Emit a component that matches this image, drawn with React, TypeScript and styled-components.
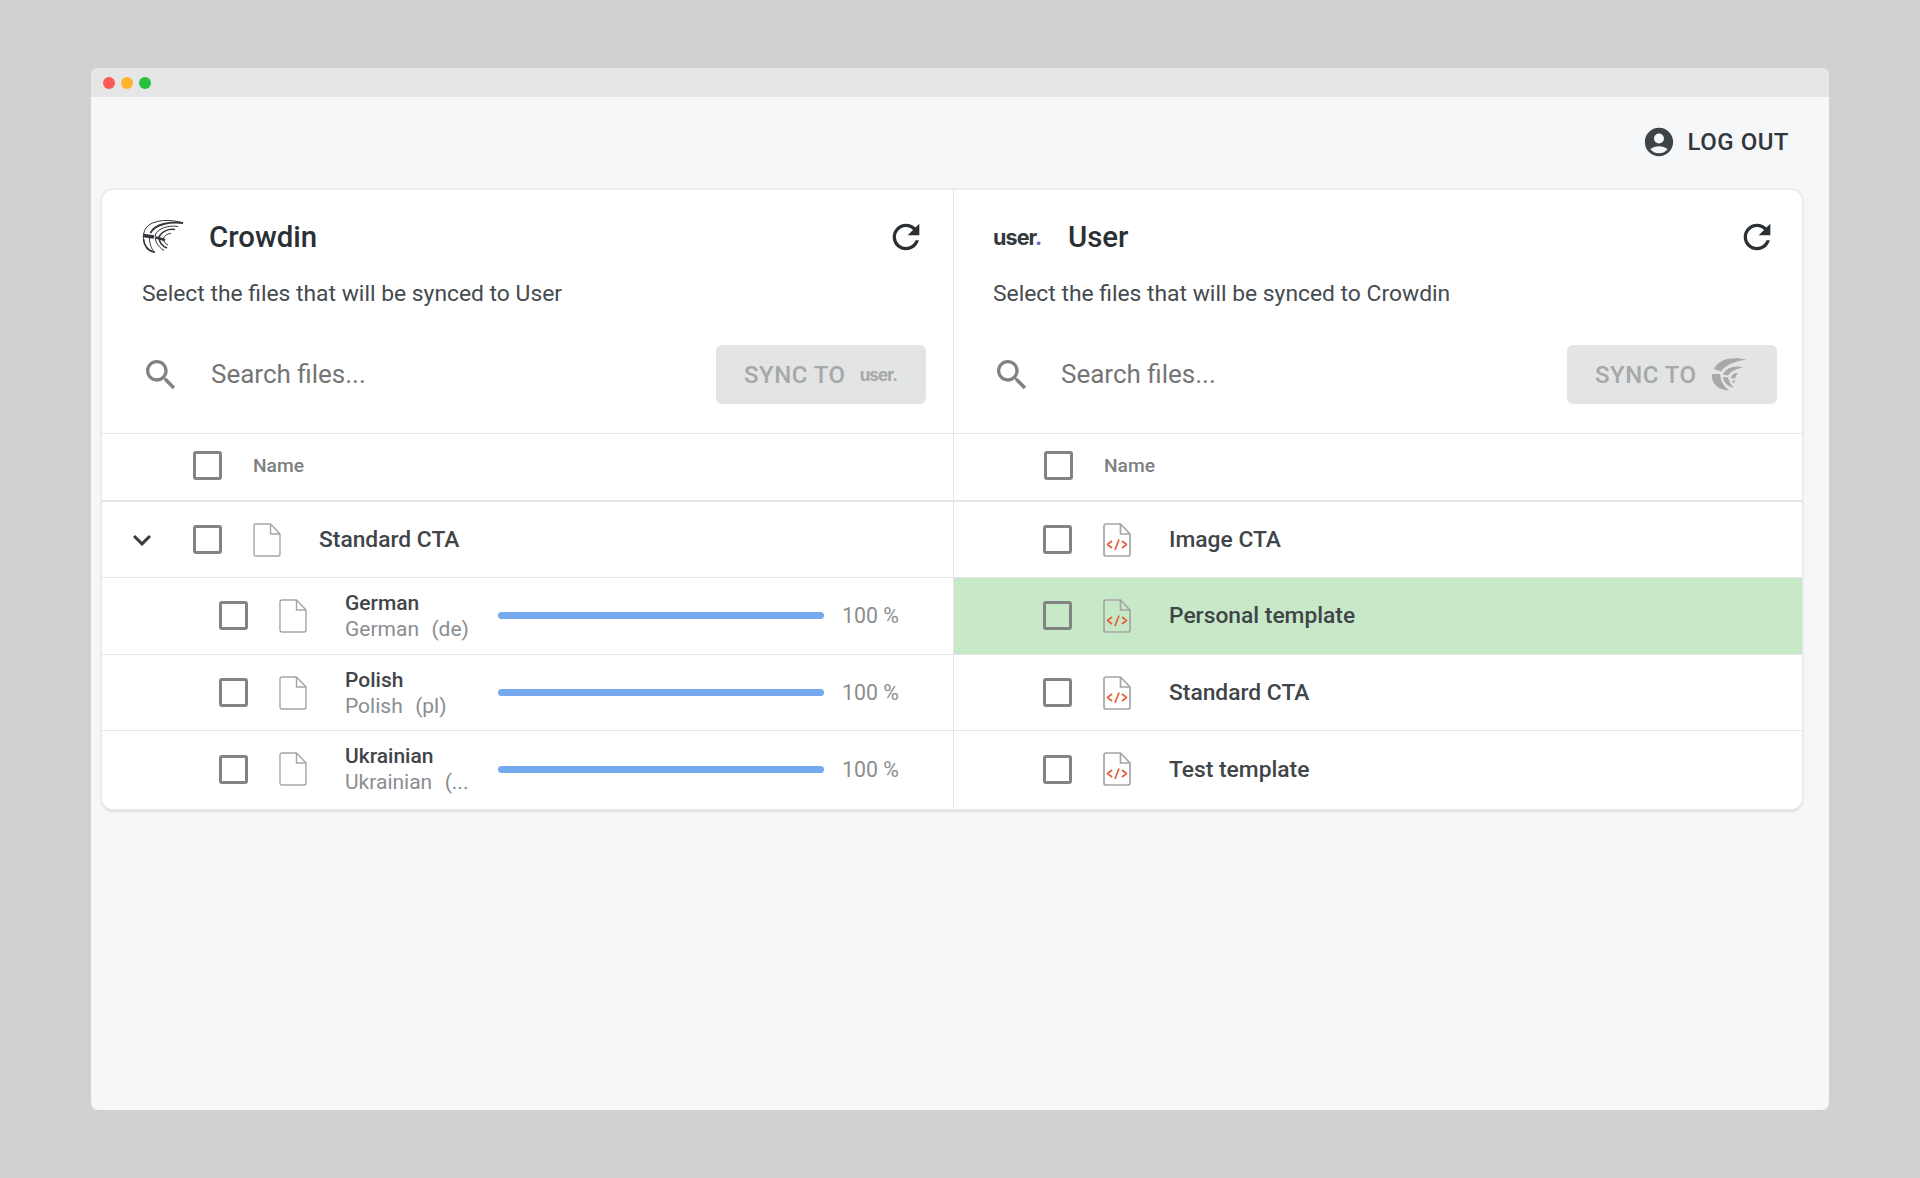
import React from "react";
import styled, { createGlobalStyle } from "styled-components";

const Global = createGlobalStyle`
  html, body { margin: 0; padding: 0; background: #d1d1d1; }
  body { font-family: Roboto, "Liberation Sans", sans-serif; }
`;

const Page = styled.div`
  width: 1920px;
  height: 1178px;
  box-sizing: border-box;
  padding: 68px 91px;
  background: #d1d1d1;
`;
const Window = styled.div`
  height: 1042px;
  border-radius: 7px;
  overflow: hidden;
  background: #f6f7f9;
`;
const TitleBar = styled.div`
  height: 29px;
  box-sizing: border-box;
  padding: 9px 0 0 12px;
  display: flex;
  gap: 6px;
  background: #e6e6e6;
`;
const Light = styled.span<{ $c: string }>`
  width: 12px;
  height: 12px;
  border-radius: 50%;
  background: ${(p) => p.$c};
`;
const TopBar = styled.div`
  height: 93px;
  box-sizing: border-box;
  padding: 0 40px 3px 0;
  display: flex;
  justify-content: flex-end;
  align-items: center;
`;
const LogOut = styled.button`
  display: flex;
  align-items: center;
  gap: 12px;
  border: 0;
  padding: 0;
  background: none;
  color: #30363a;
  font: 500 24px Roboto, sans-serif;
  letter-spacing: 0.5px;
  svg { width: 34px; height: 34px; fill: #3c4448; }
`;
const Card = styled.div`
  margin: 0 27px 0 11px;
  height: 619px;
  display: grid;
  grid-template-columns: 852px 848px;
  background: #fff;
  border-radius: 11px;
  overflow: hidden;
  box-shadow: 0 0 0 1.5px #e8e9eb, 0 2px 3px rgba(0, 0, 0, 0.2);
`;
const Panel = styled.section<{ $right?: boolean }>`
  display: flex;
  flex-direction: column;
  border-right: ${(p) => (p.$right ? "0" : "1px solid #e6e6e6")};
`;
const Head = styled.div`
  height: 244px;
  box-sizing: border-box;
  display: flex;
  flex-direction: column;
  border-bottom: 1px solid #e6e6e6;
`;
const TitleRow = styled.div<{ $right?: boolean }>`
  height: 76px;
  box-sizing: border-box;
  padding: 17px ${(p) => (p.$right ? 25 : 27)}px 0 ${(p) => (p.$right ? 39 : 40)}px;
  display: flex;
  align-items: center;
`;
const LogoSlot = styled.div<{ $w: number }>`
  width: ${(p) => p.$w}px;
  display: flex;
  align-items: center;
`;
const UserMark = styled.span<{ $muted?: boolean; $size: number }>`
  font-family: Inter, Roboto, sans-serif;
  font-weight: 700;
  font-size: ${(p) => p.$size}px;
  letter-spacing: -0.9px;
  color: ${(p) => (p.$muted ? "#a6a8a9" : "#33383b")};
  b { color: ${(p) => (p.$muted ? "#a6a8a9" : "#5c6bc0")}; font-weight: 700; }
`;
const Title = styled.h2`
  flex: 1;
  margin: 0;
  font: 500 29.4px Roboto, sans-serif;
  color: #2a3034;
`;
const Refresh = styled.svg`
  width: 40px;
  height: 40px;
  fill: #2a3034;
`;
const Subtitle = styled.p<{ $right?: boolean }>`
  margin: 0;
  padding: 6px 0 0 ${(p) => (p.$right ? 39 : 40)}px;
  height: 44px;
  line-height: 44px;
  font-size: 22.85px;
  color: #454b4e;
`;
const SearchRow = styled.div<{ $right?: boolean }>`
  height: 59px;
  margin-top: 29px;
  padding: 0 ${(p) => (p.$right ? 25 : 27)}px 0 ${(p) => (p.$right ? 38 : 39)}px;
  display: flex;
  align-items: center;
`;
const SearchGlyph = styled.svg`
  width: 40px;
  height: 40px;
  flex: none;
  fill: #7f8283;
`;
const SearchText = styled.span<{ $right?: boolean }>`
  flex: 1;
  margin-left: ${(p) => (p.$right ? 29 : 30)}px;
  padding-bottom: 2px;
  font-size: 26px;
  color: #757575;
`;
const SyncButton = styled.button`
  width: 210px;
  height: 59px;
  padding: 0 0 0 28px;
  border: 0;
  border-radius: 6px;
  background: #e3e4e4;
  display: flex;
  align-items: center;
  gap: 14px;
  color: #a6a8a9;
  font: 500 24px Roboto, sans-serif;
  letter-spacing: 0.5px;
`;
const NameHead = styled.div<{ $right?: boolean }>`
  height: 68px;
  box-sizing: border-box;
  border-bottom: 2px solid #e4e4e4;
  display: flex;
  align-items: center;
  padding: 0 0 3px ${(p) => (p.$right ? 90 : 91)}px;
`;
const HeadLabel = styled.span`
  margin-left: 31px;
  color: #7d8081;
  font-size: 19.2px;
  font-weight: 500;
`;
const Rows = styled.div`
  flex: 1;
  display: flex;
  flex-direction: column;
`;
const Row = styled.div<{ $hi?: boolean; $indent: number }>`
  height: 76.7px;
  flex: none;
  box-sizing: border-box;
  display: flex;
  align-items: center;
  padding-left: ${(p) => p.$indent}px;
  background: ${(p) => (p.$hi ? "#c8e9c8" : "transparent")};
  &:first-child { height: 75px; }
  & + & { border-top: 1px solid #e6e6e6; }
`;
const Check = styled.span`
  width: 29px;
  height: 29px;
  flex: none;
  box-sizing: border-box;
  border: 3.5px solid #828383;
  border-radius: 3px;
`;
const Chevron = styled.svg`
  width: 36px;
  height: 36px;
  flex: none;
  margin: 0 33px 0 -69px;
  fill: #363c40;
`;
const FileGlyph = styled.svg`
  width: 28px;
  height: 34px;
  flex: none;
  margin-left: 31px;
  fill: none;
  stroke: #a5a5a5;
  stroke-width: 1.4;
  stroke-linejoin: round;
`;
const FileName = styled.span`
  margin-left: 38px;
  font-size: 22.8px;
  font-weight: 500;
  color: #3f4549;
`;
const Names = styled.div`
  width: 129px;
  margin-left: 38px;
  flex: none;
  display: flex;
  flex-direction: column;
`;
const LangName = styled.span`
  font-size: 21px;
  line-height: 26px;
  font-weight: 500;
  color: #3f4549;
`;
const LangSub = styled.span`
  font-size: 21px;
  line-height: 26px;
  color: #8b8d8e;
  white-space: pre;
  word-spacing: 1px;
`;
const Track = styled.div`
  width: 326px;
  height: 7px;
  margin-left: 24px;
  flex: none;
  border-radius: 4px;
  background: #75a9ee;
`;
const Percent = styled.span`
  margin-left: 18px;
  font-size: 21.3px;
  color: #8b8d8e;
  white-space: pre;
`;

const REFRESH =
  "M17.65 6.35C16.2 4.8 14.21 4 12 4c-4.42 0-7.99 3.58-7.99 8s3.57 8 7.99 8c3.73 0 6.84-2.55 7.73-6h-2.08c-.82 2.33-3.04 4-5.65 4-3.31 0-6-2.69-6-6s2.69-6 6-6c1.66 0 3.14.69 4.22 1.78L13 11h7V4l-2.35 2.35z";
const SEARCH =
  "M15.5 14h-.79l-.28-.27C15.41 12.59 16 11.11 16 9.5 16 5.91 13.09 3 9.5 3S3 5.91 3 9.5 5.91 16 9.5 16c1.61 0 3.09-.59 4.23-1.57l.27.28v.79l5 4.99L20.49 19l-4.99-5zm-6 0C7.01 14 5 11.99 5 9.5S7.01 5 9.5 5 14 7.01 14 9.5 11.99 14 9.5 14z";

const CrowdinDark = () => (
  <svg width="41" height="33" viewBox="0 0 41 33" fill="none" stroke="#33373b" strokeWidth="1">
    <path d="M41 3C30 -1 10 -1 4 8C0 14 -1 27 13 32.5C11 31 7.5 26 7.5 18" />
    <path d="M41 3C28 1.5 13 4 8.5 13" strokeWidth="2" />
    <path d="M36 6.5C27 5 17 8 13.5 14C12.5 21 15 26 22 30.5" />
    <path d="M33 9.5C26 8.5 19.5 11.5 17 17C17 22 20 26 25 28" strokeWidth="1.5" />
    <path d="M29 13.5C25.5 13.5 22.5 15.5 21 19C22 22 23.5 24 26 25" />
    <path d="M1 15.5L12 17" strokeWidth="3.4" />
    <path d="M14 17.5L23 20" strokeWidth="2.4" />
    <path d="M1.5 19C2 26 6 31 12 32" strokeWidth="1.6" />
  </svg>
);
const CrowdinGray = () => (
  <svg width="36" height="33" viewBox="0 0 36 33" fill="#a6a8a9">
    <path d="M36 2C25 -1 9 -1 3 11L10 13.5C14 7 25 2.5 36 2Z" />
    <path d="M1 16L9 16C9.5 24 13 28 18 32.5C9 32 0 27 1 16Z" />
    <path d="M32 9.5C24 7 15 10 12 16.5L17 17.5C20 13 26 10.5 32 9.5Z" />
    <path d="M12 19L17 19.5C18 24 20 27 23 30C17 28 12.5 25 12 19Z" />
    <path d="M27 15C23 15 20.5 17 20 20L24 20.5C24.5 18 25.5 16.5 27 15Z" />
    <path d="M21 23L24.5 22L22.5 25.5Z" />
  </svg>
);

const PlainFile = () => (
  <FileGlyph viewBox="0 0 28 34">
    <path d="M3 1H17.5L27 11V31A2 2 0 0 1 25 33H3A2 2 0 0 1 1 31V3A2 2 0 0 1 3 1Z" />
    <path d="M17.5 1V11H27" />
  </FileGlyph>
);
const CodeFile = () => (
  <FileGlyph viewBox="0 0 28 34">
    <path d="M3 1H17.5L27 11V31A2 2 0 0 1 25 33H3A2 2 0 0 1 1 31V3A2 2 0 0 1 3 1Z" strokeWidth="1.7" />
    <path d="M17.5 1V11H27" strokeWidth="1.7" />
    <path d="M9 18L4.5 21.5L9 25M12 27L16 16.5M19 18L23.5 21.5L19 25" stroke="#e5603a" strokeWidth="1.7" />
  </FileGlyph>
);

const langs = [
  { name: "German", sub: "German  (de)" },
  { name: "Polish", sub: "Polish  (pl)" },
  { name: "Ukrainian", sub: "Ukrainian  (..." },
];
const templates = ["Image CTA", "Personal template", "Standard CTA", "Test template"];

export default function App() {
  return (
    <Page>
      <Global />
      <Window>
        <TitleBar>
          <Light $c="#fb5a57" />
          <Light $c="#fdb42d" />
          <Light $c="#27c13f" />
        </TitleBar>
        <TopBar>
          <LogOut>
            <svg viewBox="0 0 24 24">
              <path d="M12 2C6.48 2 2 6.48 2 12s4.48 10 10 10 10-4.48 10-10S17.52 2 12 2zm0 4c1.93 0 3.5 1.57 3.5 3.5S13.93 13 12 13s-3.5-1.57-3.5-3.5S10.07 6 12 6zm0 14c-2.03 0-4.43-.82-6.14-2.88C7.55 15.8 9.68 15 12 15s4.45.8 6.14 2.12C16.43 19.18 14.03 20 12 20z" />
            </svg>
            LOG OUT
          </LogOut>
        </TopBar>
        <Card>
          <Panel>
            <Head>
              <TitleRow>
                <LogoSlot $w={67}>
                  <CrowdinDark />
                </LogoSlot>
                <Title>Crowdin</Title>
                <Refresh viewBox="0 0 24 24">
                  <path d={REFRESH} />
                </Refresh>
              </TitleRow>
              <Subtitle>Select the files that will be synced to User</Subtitle>
              <SearchRow>
                <SearchGlyph viewBox="0 0 24 24">
                  <path d={SEARCH} />
                </SearchGlyph>
                <SearchText>Search files...</SearchText>
                <SyncButton>
                  SYNC TO
                  <UserMark $muted $size={17}>
                    user<b>.</b>
                  </UserMark>
                </SyncButton>
              </SearchRow>
            </Head>
            <NameHead>
              <Check />
              <HeadLabel>Name</HeadLabel>
            </NameHead>
            <Rows>
              <Row $indent={91}>
                <Chevron viewBox="0 0 24 24">
                  <path d="M16.59 8.59L12 13.17 7.41 8.59 6 10l6 6 6-6z" />
                </Chevron>
                <Check />
                <PlainFile />
                <FileName>Standard CTA</FileName>
              </Row>
              {langs.map((l) => (
                <Row $indent={117} key={l.name}>
                  <Check />
                  <PlainFile />
                  <Names>
                    <LangName>{l.name}</LangName>
                    <LangSub>{l.sub}</LangSub>
                  </Names>
                  <Track />
                  <Percent>100 %</Percent>
                </Row>
              ))}
            </Rows>
          </Panel>
          <Panel $right>
            <Head>
              <TitleRow $right>
                <LogoSlot $w={75}>
                  <UserMark $size={21.5}>
                    user<b>.</b>
                  </UserMark>
                </LogoSlot>
                <Title>User</Title>
                <Refresh viewBox="0 0 24 24">
                  <path d={REFRESH} />
                </Refresh>
              </TitleRow>
              <Subtitle $right>Select the files that will be synced to Crowdin</Subtitle>
              <SearchRow $right>
                <SearchGlyph viewBox="0 0 24 24">
                  <path d={SEARCH} />
                </SearchGlyph>
                <SearchText $right>Search files...</SearchText>
                <SyncButton>
                  SYNC TO
                  <CrowdinGray />
                </SyncButton>
              </SearchRow>
            </Head>
            <NameHead $right>
              <Check />
              <HeadLabel>Name</HeadLabel>
            </NameHead>
            <Rows>
              {templates.map((t, i) => (
                <Row $indent={89} $hi={i === 1} key={t}>
                  <Check />
                  <CodeFile />
                  <FileName>{t}</FileName>
                </Row>
              ))}
            </Rows>
          </Panel>
        </Card>
      </Window>
    </Page>
  );
}
